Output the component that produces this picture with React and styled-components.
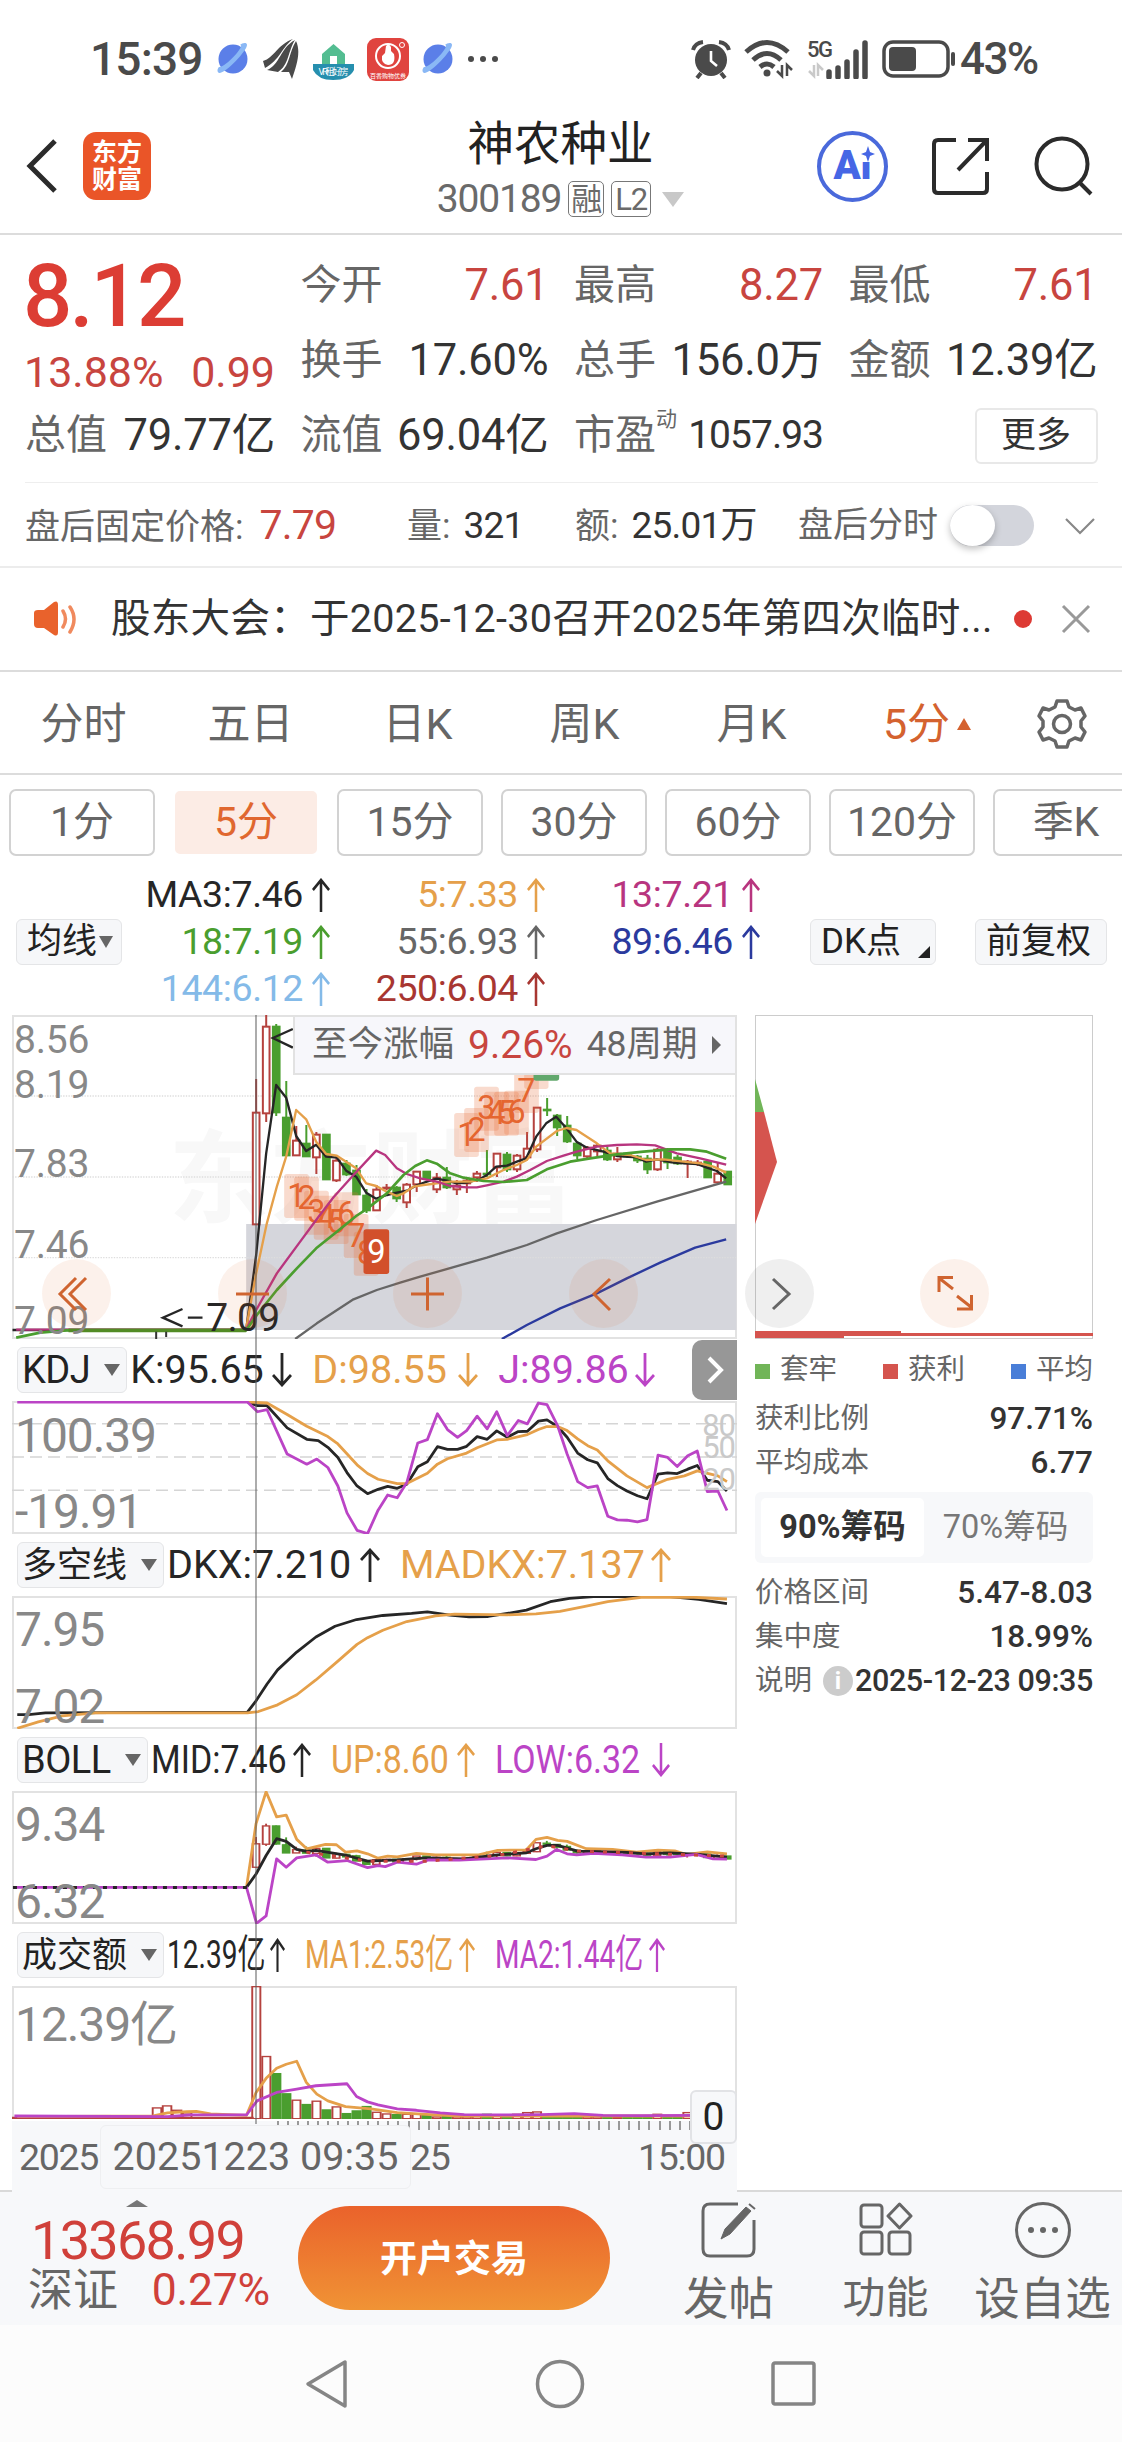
import React from 'react'
import styled, { createGlobalStyle } from 'styled-components'

const RED = '#c8453f'
const GREEN = '#4a9e2f'
const ORANGE = '#e5a04a'
const PURPLE = '#bb44c6'
const BLACK = '#262626'
const GRAY = '#666'

// [color, high, low, bodyTop, bodyBottom]
const candles = [
    ['r', 79, 225, 112, 225], ['r', 15, 122, 26, 114], ['g', 24, 116, 26, 113], ['g', 81, 156, 117, 156],
    ['r', 126, 156, 140, 156], ['g', 125, 157, 143, 157], ['r', 132, 174, 134, 158], ['g', 134, 180, 134, 180],
    ['r', 155, 182, 160, 181], ['g', 160, 176, 163, 175], ['g', 165, 195, 170, 195], ['g', 189, 213, 195, 211],
    ['r', 185, 211, 189, 211], ['r', 184, 190, 187, 189], ['g', 186, 202, 187, 199], ['r', 183, 208, 184, 203],
    ['r', 171, 192, 171, 185], ['g', 171, 179, 171, 179], ['r', 173, 193, 177, 190], ['g', 167, 189, 177, 188],
    ['r', 180, 195, 185, 190], ['r', 177, 193, 180, 184], ['r', 171, 182, 173, 178], ['g', 150, 177, 173, 175],
    ['r', 153, 177, 153, 168], ['g', 152, 172, 154, 170], ['r', 154, 172, 155, 170], ['r', 132, 160, 148, 158],
    ['r', 107, 152, 107, 150], ['g', 98, 116, 109, 111], ['g', 114, 136, 115, 128], ['g', 116, 143, 125, 142],
    ['g', 143, 159, 143, 156], ['r', 146, 158, 147, 157], ['r', 144, 156, 145, 152], ['g', 147, 161, 150, 160],
    ['r', 147, 162, 153, 160], ['g', 152, 158, 153, 157], ['g', 155, 163, 156, 161], ['g', 155, 174, 158, 170],
    ['r', 148, 171, 149, 170], ['g', 148, 169, 149, 163], ['g', 155, 165, 157, 164], ['r', 160, 178, 161, 164],
    ['r', 160, 166, 162, 164], ['g', 160, 178, 161, 178], ['r', 163, 183, 173, 183], ['g', 171, 185, 171, 185],
]

const maLines = [
    [BLACK, '37,990 738,990 768,765 798,460 828,255 858,293 888,408 918,453 948,434 978,470 1010,473 1038,512 1068,530 1098,578 1128,596 1160,585 1190,578 1220,572 1250,556 1280,545 1310,536 1340,542 1370,550 1400,548 1440,537 1460,525 1488,500 1520,497 1550,485 1578,475 1608,410 1638,370 1668,350 1699,385 1729,425 1760,443 1810,455 1850,468 1910,472 1938,485 1970,478 2020,488 2090,492 2120,503 2150,513 2178,535'],
    [ORANGE, '738,985 768,820 800,670 830,560 858,470 888,330 918,358 948,425 978,462 1010,467 1068,505 1098,550 1128,558 1160,575 1190,588 1210,580 1240,560 1270,555 1310,550 1350,545 1410,545 1460,535 1510,510 1550,495 1580,480 1608,440 1670,393 1699,384 1729,390 1790,430 1830,460 1890,465 1938,480 1990,478 2050,485 2100,490 2140,500 2178,518'],
    ['#b8357f', '48,989 738,988 768,930 830,820 900,725 948,660 1000,592 1060,525 1128,452 1155,465 1190,505 1220,522 1260,535 1310,545 1350,558 1400,562 1430,562 1460,556 1510,545 1550,530 1590,510 1640,483 1690,467 1730,455 1790,440 1850,435 1910,433 1965,436 2030,460 2100,475 2178,494'],
    [GREEN, '48,1013 120,998 200,991 738,991 770,945 830,870 890,805 948,745 1010,695 1068,648 1098,628 1160,580 1210,525 1245,498 1280,481 1310,491 1350,520 1390,533 1450,543 1510,546 1580,540 1640,508 1710,485 1770,475 1850,463 1930,455 2010,448 2070,448 2120,455 2178,476'],
    [GRAY, '885,1017 950,970 1060,898 1130,870 1200,848 1260,830 1460,773 1580,735 1670,700 1790,660 1970,605 2178,545'],
    ['#2b3a9e', '1505,1017 1580,975 1680,925 1790,880 1880,835 1980,788 2085,743 2178,718'],
]

// countdown markers: [digit, left, text baseline]
const markers = [
    [1, 852, 620], [2, 882, 628], [3, 912, 670], [4, 941, 685], [5, 971, 698], [6, 1001, 675], [7, 1031, 740], [8, 1061, 793],
    [1, 1362, 437], [2, 1392, 422], [3, 1422, 358], [4, 1452, 373], [5, 1482, 373], [6, 1512, 370], [7, 1542, 305],
]

const kdj = [
    [BLACK, '517,185 538,196 558,196 600,262 641,296 665,300 685,320 706,350 725,395 746,435 768,458 790,445 810,436 830,442 850,430 873,378 893,363 914,318 935,326 956,326 975,317 997,288 1018,296 1038,271 1060,290 1083,273 1102,272 1125,242 1143,238 1165,258 1185,290 1207,337 1228,357 1248,366 1270,413 1290,434 1310,450 1332,464 1352,473 1375,400 1395,396 1415,398 1437,385 1457,374 1478,418 1500,422 1519,450'],
    [ORANGE, '517,185 558,188 600,222 641,257 685,288 706,310 746,372 768,398 790,415 830,428 850,428 893,397 914,370 935,354 975,337 997,321 1038,298 1060,296 1102,282 1125,267 1143,258 1165,258 1185,270 1207,295 1228,315 1248,328 1270,360 1310,405 1352,440 1395,415 1430,405 1457,390 1500,405 1519,422'],
    [PURPLE, '36,185 517,185 538,214 558,208 600,340 641,370 662,355 685,380 706,435 725,515 746,567 768,577 790,507 810,462 830,470 850,425 873,307 893,297 914,220 935,267 956,290 975,270 997,227 1018,265 1038,214 1060,285 1083,240 1102,250 1125,188 1143,193 1165,255 1185,340 1207,422 1228,440 1248,435 1270,525 1290,536 1310,537 1332,542 1352,535 1375,343 1395,350 1415,377 1437,345 1457,331 1478,452 1500,450 1519,508'],
]

const dkx = [
    [BLACK, '36,521 60,521 95,516 517,514 535,480 558,430 580,388 620,335 660,290 700,258 745,238 800,226 860,220 893,215 940,225 980,230 1020,229 1060,220 1100,210 1150,185 1190,175 1240,170 1400,170 1460,178 1519,191'],
    [ORANGE, '36,562 80,543 130,525 200,516 517,516 540,512 580,492 620,462 660,418 706,362 746,312 768,292 800,270 850,244 910,227 950,222 1060,224 1120,221 1170,214 1220,200 1270,185 1340,172 1440,171 1519,177'],
]

const boll = [
    [ORANGE, '515,455 535,265 556,170 578,245 598,240 620,312 641,340 680,327 703,328 722,350 746,346 768,355 790,368 810,362 830,364 870,354 910,358 1000,358 1040,345 1100,343 1120,312 1143,306 1165,315 1185,318 1225,340 1280,342 1330,350 1375,344 1410,346 1435,357 1478,349 1519,355'],
    [BLACK, '515,455 535,415 556,360 578,310 598,318 620,342 641,348 660,345 725,360 768,377 830,373 890,367 970,370 1040,358 1100,352 1120,340 1143,330 1165,330 1207,347 1310,351 1350,355 1400,352 1460,357 1519,365'],
    [PURPLE, '27,455 515,455 536,562 556,540 578,370 598,395 620,367 660,358 685,380 725,375 768,396 790,390 805,393 830,380 870,386 895,373 960,374 1060,367 1120,372 1143,362 1163,342 1185,355 1205,358 1240,354 1300,358 1350,365 1400,365 1455,357 1490,370 1519,371'],
]

const volumeLines = [
    [ORANGE, '36,557 320,555 350,546 390,542 410,541 440,549 515,553 535,485 556,443 578,413 598,401 620,392 640,455 662,490 685,510 722,527 775,534 830,545 890,550 960,555 1450,555'],
    [PURPLE, '30,555 350,557 400,552 515,552 537,510 578,485 620,475 660,465 725,459 745,497 768,513 790,522 830,534 870,538 920,546 970,551 1050,552 1130,551 1200,548 1260,553 1340,554 1450,553'],
]

const volumeTops = [
    168, 376, 427, 487, 506, 519, 509, 535, 526, 546, 538, 525, 542, 547, 549, 548, 548, 552, 556, 554, 556, 556, 555, 548,
    552, 554, 548, 543, 541, 552, 550, 552, 552, 556, 556, 556, 557, 556, 557, 556, 548, 552, 556, 543,
]

const ArrowIcon = ({ down, w = 20 }) => (
    <svg width={w} height="34" viewBox="0 0 20 34" preserveAspectRatio="none" fill="none" stroke="currentColor" strokeWidth="2.8">
        <path d={down ? 'M10 0V32M1 22L10 32L19 22' : 'M10 34V2M1 12L10 2L19 12'} />
    </svg>
)

const Planet = () => (
    <svg width="32" height="34" viewBox="0 0 32 34">
        <circle cx="16" cy="17" r="14.5" fill="#5b7fe8" />
        <path d="M2 31C8 32 30 9 30 3C30 0 25 1 23 3C29 3 8 26 2 25C0 27 0 30 2 31Z" fill="#8ab8f5" />
    </svg>
)

const Lines = ({ data }) => data.map(([color, points]) => (
    <polyline key={color} points={points} fill="none" stroke={color} strokeWidth="2.8" strokeLinejoin="round" vectorEffect="non-scaling-stroke" />
))

const Indicator = ({ name, readings, labels, condense, tall, children }) => (
    <>
        <IndicatorHead>
            <NameButton $head $tight={name === 'BOLL' || name === 'KDJ'}>{name}<Caret /></NameButton>
            {readings.map(([text, color, width, down, arrow]) => (
                <Reading key={text} $color={color}>
                    <ReadingText $w={width} $sx={condense}>{text}</ReadingText>
                    <ArrowIcon down={down} w={arrow} />
                </Reading>
            ))}
        </IndicatorHead>
        <Panel>
            <PanelSvg viewBox={tall ? '25 182 1515 396' : '25 168 1515 396'} preserveAspectRatio="none">{children}</PanelSvg>
            {labels.map(([text, top]) => <PanelLabel key={text} $top={top}>{text}</PanelLabel>)}
        </Panel>
    </>
)

const StatusBar = () => (
    <Status>
        <Clock>15:39</Clock>
        <StatusIcons>
            <Planet />
            <svg width="38" height="42" viewBox="0 0 38 42" fill="#4a4a4a">
                <path d="M1 23C12 20 16 6 31 1C20 9 18 22 3 30ZM5 32C18 27 18 10 33 2C26 13 27 27 16 34ZM19 34C28 27 27 14 34 3C39 13 35 27 30 41L27 34Z" />
            </svg>
            <svg width="41" height="42" viewBox="0 0 41 42">
                <path d="M0 26H41V32Q36 42 20 42Q5 42 0 32Z" fill="#268fae" />
                <path d="M9 16L20.500 6L32 16V26H9Z" fill="#53bd91" />
                <path d="M17 26V18H24V26" fill="#fff" />
                <text x="20.500" y="37" textAnchor="middle" fontSize="9" fill="#fff" textLength="30">VR租好房</text>
            </svg>
            <svg width="42" height="43" viewBox="0 0 42 43">
                <rect width="42" height="43" rx="9" fill="#e0443f" />
                <circle cx="21" cy="18" r="12" fill="none" stroke="#fff" strokeWidth="2" />
                <path d="M15 18L18 15L19 8Q22 5 24 9V13L27 16Q29 27 21 27Q14 26 15 18Z" fill="#fff" />
                <circle cx="35" cy="7" r="2.500" fill="none" stroke="#fff" />
                <text x="21" y="40" textAnchor="middle" fontSize="6" fill="#fff">百香购物优券</text>
            </svg>
            <Planet />
            <svg width="32" height="8" fill="#4a4a4a"><circle cx="4" cy="4" r="3" /><circle cx="16" cy="4" r="3" /><circle cx="28" cy="4" r="3" /></svg>
        </StatusIcons>
        <StatusRight>
            <svg width="40" height="40" viewBox="0 0 40 40">
                <circle cx="20" cy="21" r="16" fill="#4a4a4a" />
                <path d="M20 12V22L26 27" fill="none" stroke="#fff" strokeWidth="2.600" />
                <path d="M2 11Q4 4 12 3M38 11Q36 4 28 3M10 34L6 39M30 34L34 39" fill="none" stroke="#4a4a4a" strokeWidth="4" />
            </svg>
            <svg width="50" height="40" viewBox="0 0 50 40" fill="none" stroke="#4a4a4a" strokeWidth="5">
                <path d="M2 13Q23 -6 44 13M9 21Q23 8 37 21M16 28Q23 22 30 28" />
                <circle cx="23" cy="34" r="3.500" fill="#4a4a4a" stroke="none" />
                <path d="M38 26V37L33 32M43 37V26L48 31" strokeWidth="2.500" />
            </svg>
            <svg width="62" height="40" viewBox="0 0 62 40">
                <text x="0" y="18" fontSize="22" fontWeight="500" fill="#4a4a4a" textLength="26">5G</text>
                <path d="M7 26V37L2 32M11 37V26L16 31" stroke="#c9c9c9" strokeWidth="2.500" fill="none" />
                <path d="M22 38V33M31 38V29M40 38V23M49 38V13M58 38V4" stroke="#4a4a4a" strokeWidth="5.500" strokeLinecap="round" />
            </svg>
            <svg width="76" height="38" viewBox="0 0 76 38">
                <rect x="2" y="2" width="64" height="34" rx="9" fill="none" stroke="#4a4a4a" strokeWidth="3.500" />
                <rect x="7" y="7" width="27" height="24" rx="4" fill="#4a4a4a" />
                <path d="M71 14V24" stroke="#4a4a4a" strokeWidth="4" strokeLinecap="round" />
            </svg>
            <Battery>43%</Battery>
        </StatusRight>
    </Status>
)

const Header = () => (
    <HeaderBar>
        <HeaderSide>
            <svg width="32" height="56" viewBox="0 0 32 56"><path d="M29 3L4 28L29 53" fill="none" stroke="#2b2b2b" strokeWidth="5" /></svg>
            <Logo><span>东方</span><span>财富</span></Logo>
        </HeaderSide>
        <TitleBlock>
            <Title>神农种业</Title>
            <Code>300189<Badge>融</Badge><Badge $w="40px">L2</Badge><TitleCaret /></Code>
        </TitleBlock>
        <HeaderTools>
            <AiBadge>
                Ai
                <svg width="14" height="16" viewBox="0 0 14 16">
                    <rect width="14" height="16" fill="#fff" />
                    <path d="M7 0L9 6L14 8L9 10L7 16L5 10L0 8L5 6Z" fill="#4666e5" />
                </svg>
            </AiBadge>
            <svg width="60" height="60" viewBox="0 0 60 60" fill="none" stroke="#2b2b2b" strokeWidth="4">
                <path d="M25 4H7Q3 4 3 8V53Q3 57 7 57H52Q56 57 56 53V36M37 4H56V25M56 4L27 34" />
            </svg>
            <svg width="60" height="60" viewBox="0 0 60 60" fill="none" stroke="#2b2b2b" strokeWidth="4">
                <circle cx="28" cy="28" r="25.500" /><path d="M46 47L57 58" />
            </svg>
        </HeaderTools>
    </HeaderBar>
)

const Quote = () => (
    <QuoteGrid>
        <PriceCell>
            <Price>8.12</Price>
            <Change><span>13.88%</span><span>0.99</span></Change>
        </PriceCell>
        <Stat>今开<StatValue $red>7.61</StatValue></Stat>
        <Stat>最高<StatValue $red>8.27</StatValue></Stat>
        <Stat>最低<StatValue $red>7.61</StatValue></Stat>
        <Stat>换手<StatValue>17.60%</StatValue></Stat>
        <Stat>总手<StatValue>156.0万</StatValue></Stat>
        <Stat>金额<StatValue>12.39亿</StatValue></Stat>
        <Stat>总值<StatValue>79.77亿</StatValue></Stat>
        <Stat>流值<StatValue>69.04亿</StatValue></Stat>
        <Stat><span>市盈<Sup>动</Sup></span><StatValue $small>1057.93</StatValue></Stat>
        <MoreButton>更多</MoreButton>
    </QuoteGrid>
)

const MainChart = () => (
    <MainPanel>
        <PanelSvg viewBox="37 45 2172 972">
            <text x="505" y="645" fontSize="302" fontWeight="700" fill="#f8f8f8" textLength="1218">东方财富</text>
            <rect x="738" y="672" width="1471" height="318" fill="#d5d6dc" />
            {[288, 531, 773].map(y => <path key={y} d={`M37 ${y}H2209`} stroke="#ddd" strokeWidth="4" strokeDasharray="4 4" />)}
            {candles.map(([c, high, low, top, bottom], i) => {
                const x = 768 + i * 30.1
                const color = c === 'r' ? '#b5423e' : GREEN
                return (
                    <g key={i} stroke={color} strokeWidth="6">
                        <path d={`M${x} ${high * 3}V${top * 3}M${x} ${bottom * 3}V${low * 3}`} />
                        <rect x={x - 10} y={top * 3 + 2} width="20" height={Math.max(2, (bottom - top) * 3 - 4)} fill={c === 'r' ? '#fff' : color} />
                    </g>
                )
            })}
            {markers.map(([n, x, y]) => (
                <g key={x}>
                    <rect x={x} y={y - 98} width="74" height="132" rx="8" fill="#e8703a" opacity=".25" />
                    <text x={x + 37} y={y} textAnchor="middle" fontSize="98" fill="#e5652f">{n}</text>
                </g>
            ))}
            <rect x="1572" y="180" width="73" height="87" rx="8" fill="#e8703a" opacity=".25" />
            <rect x="1600" y="180" width="77" height="62" rx="8" fill="#62a86c" />
            {maLines.map(([color, points]) => (
                <polyline key={color} points={points} fill="none" stroke={color} strokeWidth={color === GREEN ? 8 : 7} strokeLinejoin="round" />
            ))}
            <path d="M205 991H738" stroke="#528b25" strokeWidth="11" />
            <path d="M468 995V1017M498 995V1011" stroke="#333" strokeWidth="6" />
            <rect x="1090" y="688" width="77" height="134" rx="8" fill="#d2502b" />
            <text x="1129" y="788" textAnchor="middle" fontSize="98" fill="#fff">9</text>
            <path d="M878 87L818 114L878 143M547 927L488 953L547 979M563 953H607" fill="none" stroke={BLACK} strokeWidth="7" />
            <text x="618" y="992" fontSize="117" fill={BLACK} textLength="222">7.09</text>
        </PanelSvg>
        <AxisLabel $top={16}>8.56</AxisLabel>
        <AxisLabel $top={61}>8.19</AxisLabel>
        <AxisLabel $top={140}>7.83</AxisLabel>
        <AxisLabel $top={221}>7.46</AxisLabel>
        <AxisLabel $top={297}>7.09</AxisLabel>
        <RangeBar>至今涨幅<em>9.26%</em>48周期<RangeCaret /></RangeBar>
    </MainPanel>
)

const toolIcons = [
    'M34 19L18 35L34 51M44 19L28 35L44 51',
    'M18 35H51',
    'M18 35H51M34.500 18.500V51.500',
    'M41 20L25 35L41 51',
    'M28 20L44 35L28 50',
    'M33 30L19 19M19 33V18.500H33M37 37L51 48M37 50H51.500V36',
]

export default function App() {
    return (
        <Page>
            <GlobalStyle />
            <StatusBar />
            <Header />
            <Quote />
            <AfterHours>
                <AfterItem $w="382px">盘后固定价格:<b className="up">7.79</b></AfterItem>
                <AfterItem $w="168px">量:<b>321</b></AfterItem>
                <AfterItem $w="223px">额:<b>25.01万</b></AfterItem>
                <AfterItem $w="152px">盘后分时</AfterItem>
                <Toggle />
                <svg width="32" height="18" viewBox="0 0 32 18"><path d="M2 2L16 16L30 2" fill="none" stroke="#888" strokeWidth="2.200" /></svg>
            </AfterHours>
            <Notice>
                <svg width="44" height="36" viewBox="0 0 44 36">
                    <path d="M0 12Q0 9 4 9H10L20 1Q24 -1 24 4V31Q24 36 20 34L10 27H4Q0 27 0 23Z" fill="#e9622c" />
                    <path d="M29 10Q34 18 29 26M36 6Q44 18 36 31" fill="none" stroke="#f08a5e" strokeWidth="3.500" strokeLinecap="round" />
                </svg>
                <NoticeText>股东大会：于2025-12-30召开2025年第四次临时...</NoticeText>
                <Dot />
                <svg width="30" height="30" viewBox="0 0 30 30"><path d="M2 2L28 28M28 2L2 28" stroke="#999" strokeWidth="3" /></svg>
            </Notice>
            <Tabs>
                <Tab>分时</Tab><Tab>五日</Tab><Tab>日K</Tab><Tab>周K</Tab><Tab>月K</Tab>
                <Tab $on>5分<UpCaret /></Tab>
                <Tab>
                    <svg width="52" height="52" viewBox="0 0 52 52" fill="none" stroke="#666" strokeWidth="3.500" strokeLinejoin="round">
                        <path d="M21 3H31L33 9L39 12L45 10L49 18L45 23V29L49 34L45 42L39 40L33 43L31 49H21L19 43L13 40L7 42L3 34L7 29V23L3 18L7 10L13 12L19 9Z" />
                        <circle cx="26" cy="26" r="8.500" />
                    </svg>
                </Tab>
            </Tabs>
            <Periods>
                {['1分', '5分', '15分', '30分', '60分', '120分', '季K'].map(p => <Period key={p} $on={p === '5分'}>{p}</Period>)}
            </Periods>
            <Averages>
                <NameButton $ma>均线<Caret $small /></NameButton>
                <AverageGrid>
                    <Average $color={BLACK}>MA3:7.46<ArrowIcon w={18} /></Average>
                    <Average $color={ORANGE}>5:7.33<ArrowIcon w={18} /></Average>
                    <Average $color="#b8357f">13:7.21<ArrowIcon w={18} /></Average>
                    <Average $color={GREEN}>18:7.19<ArrowIcon w={18} /></Average>
                    <Average $color={GRAY}>55:6.93<ArrowIcon w={18} /></Average>
                    <Average $color="#2b3a9e">89:6.46<ArrowIcon w={18} /></Average>
                    <Average $color="#84bae8">144:6.12<ArrowIcon w={18} /></Average>
                    <Average $color="#a83631">250:6.04<ArrowIcon w={18} /></Average>
                </AverageGrid>
                <NameButton $dk>DK点<Corner /></NameButton>
                <NameButton $adj>前复权</NameButton>
            </Averages>
            <Body>
                <Charts>
                    <MainChart />
                    <Indicator
                        tall
                        name="KDJ"
                        readings={[['K:95.65', BLACK, 142, true, 20], ['D:98.55', ORANGE, 146, true, 20], ['J:89.86', PURPLE, 137, true, 20]]}
                        labels={[['100.39', 15], ['-19.91', 91]]}
                    >
                        <path d="M25 250H1540M25 349H1540M25 448H1540" stroke="#d5d5d5" strokeWidth="1.500" strokeDasharray="12 6" vectorEffect="non-scaling-stroke" />
                        <Lines data={kdj} />
                    </Indicator>
                    <Indicator
                        name="多空线"
                        readings={[['DKX:7.210', BLACK, 193, false, 20], ['MADKX:7.137', ORANGE, 251, false, 20]]}
                        labels={[['7.95', 14], ['7.02', 91]]}
                    >
                        <Lines data={dkx} />
                    </Indicator>
                    <Indicator
                        name="BOLL"
                        condense={0.86}
                        readings={[['MID:7.46', BLACK, 142, false, 18], ['UP:8.60', ORANGE, 126, false, 18], ['LOW:6.32', PURPLE, 157, true, 18]]}
                        labels={[['9.34', 14], ['6.32', 91]]}
                    >
                        {candles.map(([c, high, low, top, bottom], i) => {
                            const y = v => 256 + v * 0.618
                            const color = c === 'r' ? '#b5423e' : GREEN
                            return (
                                <g key={i} stroke={color} fill={c === 'r' ? '#fff' : color}>
                                    <path d={`M${535 + i * 20.95} ${y(high)}V${y(low)}`} strokeWidth="4" />
                                    <rect x={528 + i * 20.95} y={y(top)} width="14" height={Math.max(3, (bottom - top) * 0.618)} strokeWidth="4" />
                                </g>
                            )
                        })}
                        <Lines data={boll} />
                        <path d="M27 455H520" stroke={BLACK} strokeWidth="3" strokeDasharray="4 6" vectorEffect="non-scaling-stroke" />
                        <path d="M640 350L768 377H890L1040 360L1143 331L1207 347L1519 362" fill="none" stroke={RED} strokeWidth="3" strokeDasharray="4 9" vectorEffect="non-scaling-stroke" />
                    </Indicator>
                    <Indicator
                        name="成交额"
                        condense={0.71}
                        readings={[['12.39亿', BLACK, 103, false, 15], ['MA1:2.53亿', ORANGE, 154, false, 16], ['MA2:1.44亿', PURPLE, 154, false, 16]]}
                        labels={[['12.39亿', 19]]}
                    >
                        {[531, 525, 538, 546].map((top, i) => (
                            <rect key={top} x={319 + i * 21} y={top} width="18" height={563 - top} fill="#fff" stroke="#b5423e" strokeWidth="4" />
                        ))}
                        {volumeTops.map((top, i) => {
                            const red = candles[i][0] === 'r'
                            return <rect key={i} x={527 + i * 20.95} y={top + 2} width="17" height={561 - top} fill={red ? '#fff' : GREEN} stroke={red ? '#b5423e' : GREEN} strokeWidth="4" />
                        })}
                        <path d="M25 562H530" stroke="#b5423e" strokeWidth="3" vectorEffect="non-scaling-stroke" />
                        <Lines data={volumeLines} />
                    </Indicator>
                    <TimeAxis>
                        <Ticks />
                        <AxisTime $x={7}>2025</AxisTime>
                        <AxisTime $x={398}>25</AxisTime>
                        <AxisTime $x={626}>15:00</AxisTime>
                        <TimeTip>20251223 09:35</TimeTip>
                        <ZeroTip>0</ZeroTip>
                    </TimeAxis>
                    <Cross />
                    <Scale><span>80</span><span>50</span><span>20</span></Scale>
                    <Drawer><svg width="20" height="30" viewBox="0 0 20 30"><path d="M4 3L16 15L4 27" fill="none" stroke="#fff" strokeWidth="4" /></svg></Drawer>
                </Charts>
                <Chips>
                    <ChipBox>
                        <svg width="338" height="323" viewBox="0 0 338 323">
                            <path d="M0 64L9 97H0Z" fill="#71b558" />
                            <path d="M0 97H9L22 147L0 209Z" fill="#d5544e" />
                            <path d="M0 316H146V318H338V321H89V323H0Z" fill="#d5544e" />
                        </svg>
                    </ChipBox>
                    <Legend>
                        <LegendItem $color="#71b558">套牢</LegendItem>
                        <LegendItem $color="#d5544e">获利</LegendItem>
                        <LegendItem $color="#497ed8">平均</LegendItem>
                    </Legend>
                    <ChipRow>获利比例<b>97.71%</b></ChipRow>
                    <ChipRow>平均成本<b>6.77</b></ChipRow>
                    <Segment><Choice $on>90%筹码</Choice><Choice>70%筹码</Choice></Segment>
                    <ChipRow>价格区间<b>5.47-8.03</b></ChipRow>
                    <ChipRow>集中度<b>18.99%</b></ChipRow>
                    <ChipRow $dense>说明<Info>i</Info><b>2025-12-23 09:35</b></ChipRow>
                </Chips>
                <ToolRow>
                    {toolIcons.map((d, i) => (
                        <Tool key={d} $gray={i === 4}>
                            <svg width="69" height="69" viewBox="0 0 69 69"><path d={d} fill="none" stroke="currentColor" strokeWidth="3" /></svg>
                        </Tool>
                    ))}
                </ToolRow>
            </Body>
            <BottomBar>
                <IndexBlock>
                    <IndexCaret />
                    <IndexValue>13368.99</IndexValue>
                    <IndexLine>深证<span>0.27%</span></IndexLine>
                </IndexBlock>
                <TradeButton>开户交易</TradeButton>
                <Actions>
                    <Action>
                        <svg width="56" height="56" viewBox="0 0 56 56" fill="none" stroke="#666" strokeWidth="3">
                            <path d="M37 2H9Q2 2 2 9V47Q2 54 9 54H46Q53 54 53 47V18" />
                            <path d="M20 37L24 27L45 5L50 9L29 32Z" fill="#666" strokeWidth="1" /><path d="M48 2L54 7" strokeWidth="2" />
                        </svg>
                        发帖
                    </Action>
                    <Action $small>
                        <svg width="56" height="56" viewBox="0 0 56 56" fill="none" stroke="#666" strokeWidth="3">
                            <rect x="3" y="3" width="21" height="22" rx="3" /><rect x="3" y="30" width="21" height="22" rx="3" />
                            <rect x="31" y="30" width="21" height="22" rx="3" /><path d="M41.500 2L53 14L41.500 26L30 14Z" strokeLinejoin="round" />
                        </svg>
                        功能
                    </Action>
                    <Action>
                        <svg width="58" height="56" viewBox="0 0 58 56">
                            <circle cx="29" cy="28" r="26.500" fill="none" stroke="#666" strokeWidth="3" />
                            <g fill="#666"><circle cx="17" cy="28" r="3" /><circle cx="29" cy="28" r="3" /><circle cx="41" cy="28" r="3" /></g>
                        </svg>
                        设自选
                    </Action>
                </Actions>
            </BottomBar>
            <SystemNav>
                <svg width="44" height="50" viewBox="0 0 44 50"><path d="M40 3V47L3 25Z" fill="none" stroke="#858585" strokeWidth="3.500" strokeLinejoin="round" /></svg>
                <svg width="50" height="50" viewBox="0 0 50 50"><circle cx="25" cy="25" r="22.500" fill="none" stroke="#858585" strokeWidth="3.500" /></svg>
                <svg width="46" height="46" viewBox="0 0 46 46"><rect x="2" y="2" width="41" height="41" rx="2" fill="none" stroke="#858585" strokeWidth="3.500" /></svg>
            </SystemNav>
        </Page>
    )
}

const GlobalStyle = createGlobalStyle`
    * { box-sizing: border-box; }
    body {
        margin: 0;
        background: #fff;
        font-family: Roboto, "Noto Sans CJK SC", sans-serif;
        line-height: 1;
        white-space: nowrap;
    }
    svg { display: block; flex: none; }
`

const Page = styled.div`
    width: 1122px;
    height: 2442px;
    overflow: hidden;
    background: #fff;
    color: ${GRAY};
`

const Status = styled.div`
    display: flex;
    align-items: center;
    height: 82px;
    padding: 36px 0 0 90px;
`

const Clock = styled.div`
    width: 127px;
    font-size: 46px;
    font-weight: 500;
    letter-spacing: -0.8px;
    color: #4a4a4a;
`

const StatusIcons = styled.div`
    display: flex;
    align-items: center;
    gap: 13px;
    width: 474px;
`

const StatusRight = styled.div`
    display: flex;
    align-items: center;
    gap: 13px;
`

const Battery = styled.div`
    margin-left: -11px;
    font-size: 44px;
    font-weight: 500;
    letter-spacing: -1.6px;
    color: #4a4a4a;
`

const HeaderBar = styled.div`
    display: flex;
    align-items: center;
    justify-content: space-between;
    height: 153px;
    padding: 17px 28px 0 26px;
    border-bottom: 2px solid #dcdcdc;
`

const HeaderSide = styled.div`
    display: flex;
    align-items: center;
    gap: 25px;
    width: 274px;
`

const Logo = styled.div`
    display: flex;
    flex-direction: column;
    align-items: center;
    justify-content: center;
    gap: 2px;
    width: 68px;
    height: 68px;
    border-radius: 13px;
    background: #ea5528;
    color: #fff;
    font-size: 25px;
    font-weight: 700;
`

const TitleBlock = styled.div`
    display: flex;
    flex-direction: column;
    align-items: center;
    gap: 14px;
    padding: 6px 0 0 4px;
`

const Title = styled.div`
    font-size: 46.5px;
    color: #222;
`

const Code = styled.div`
    display: flex;
    align-items: center;
    height: 36px;
    font-size: 39px;
    letter-spacing: -1.2px;
    color: #6a6a6a;
`

const Badge = styled.span`
    display: flex;
    align-items: center;
    justify-content: center;
    width: ${p => p.$w || '36px'};
    height: 36px;
    margin-left: 7px;
    border: 1.5px solid #777;
    border-radius: 5px;
    font-size: 31px;
`

const TitleCaret = styled.i`
    margin-left: 11px;
    border: 11px solid transparent;
    border-top: 15px solid #c8c8c8;
    border-bottom: 0;
`

const HeaderTools = styled.div`
    display: flex;
    align-items: center;
    gap: 43px;
`

const AiBadge = styled.div`
    position: relative;
    display: flex;
    align-items: center;
    justify-content: center;
    width: 71px;
    height: 71px;
    border: 4px solid #4a69db;
    border-radius: 50%;
    color: #4666e5;
    font-size: 40px;
    font-weight: 900;

    svg {
        position: absolute;
        top: 11px;
        right: 9px;
    }
`

const QuoteGrid = styled.div`
    display: grid;
    grid-template-columns: 250px 248px 249px 249px;
    grid-template-rows: 75px 75px 75px;
    column-gap: 25.500px;
    height: 248px;
    margin: 0 24px 0 25px;
    padding-top: 13px;
    border-bottom: 1.5px solid #eee;
`

const PriceCell = styled.div`
    grid-row: span 2;
    padding-top: 5px;
`

const Price = styled.div`
    margin-left: -2px;
    font-size: 87px;
    font-weight: 500;
    letter-spacing: -3px;
    color: #dc3d34;
`

const Change = styled.div`
    display: flex;
    justify-content: space-between;
    margin: 11px 0 0 -1px;
    font-size: 43px;
    color: ${RED};
`

const Stat = styled.div`
    display: flex;
    align-items: center;
    justify-content: space-between;
    font-size: 41px;
`

const StatValue = styled.span`
    font-size: ${p => (p.$small ? '39px' : '43.5px')};
    letter-spacing: ${p => (p.$small ? '-1px' : '-0.2px')};
    color: ${p => (p.$red ? RED : '#333')};
`

const Sup = styled.sup`
    display: inline-block;
    vertical-align: 23px;
    line-height: 0;
    font-size: 21px;
`

const MoreButton = styled.div`
    display: flex;
    align-items: center;
    justify-content: center;
    justify-self: end;
    align-self: center;
    width: 123px;
    height: 56px;
    border: 2px solid #e8e8e8;
    border-radius: 6px;
    font-size: 35px;
    color: #333;
`

const AfterHours = styled.div`
    display: flex;
    align-items: center;
    height: 85px;
    padding: 2px 0 0 25px;
    border-bottom: 2px solid #ececec;
    font-size: 35px;
`

const AfterItem = styled.div`
    width: ${p => p.$w};
    flex: none;

    b {
        margin-left: 13px;
        font-size: 37px;
        font-weight: 400;
        letter-spacing: -0.8px;
        color: #333;
    }
    .up {
        margin-left: 16px;
        font-size: 41px;
        color: ${RED};
    }
`

const Toggle = styled.div`
    width: 84px;
    height: 41px;
    margin-right: 30px;
    border-radius: 21px;
    background: #d3d5dc;
    flex: none;

    &::before {
        content: '';
        display: block;
        width: 45px;
        height: 41px;
        border-radius: 50%;
        background: #fff;
        box-shadow: 0 3px 7px rgba(0, 0, 0, 0.25);
    }
`

const Notice = styled.div`
    display: flex;
    align-items: center;
    height: 104px;
    padding-left: 34px;
    border-bottom: 2px solid #dcdcdc;
`

const NoticeText = styled.div`
    width: 903px;
    margin-left: 33px;
    font-size: 39.5px;
    letter-spacing: 0.3px;
    color: #333;
`

const Dot = styled.i`
    width: 18px;
    height: 18px;
    margin-right: 29px;
    border-radius: 50%;
    background: #dd3a34;
`

const Tabs = styled.div`
    display: grid;
    grid-template-columns: repeat(6, 167px) 120px;
    height: 103px;
    border-bottom: 2px solid #dcdcdc;
`

const Tab = styled.div`
    display: flex;
    align-items: center;
    justify-content: center;
    gap: 7px;
    padding-top: 3px;
    padding-left: ${p => (p.$on ? '17px' : 0)};
    font-size: 43px;
    color: ${p => (p.$on ? '#d4622f' : GRAY)};
`

const UpCaret = styled.i`
    border: 7.5px solid transparent;
    border-bottom: 12px solid #d4622f;
    border-top: 0;
`

const Periods = styled.div`
    display: flex;
    gap: 18px;
    padding: 14px 0 0 9px;
`

const Period = styled.div`
    display: flex;
    align-items: center;
    justify-content: center;
    flex: none;
    width: 146px;
    height: 67px;
    border: 2px solid ${p => (p.$on ? '#fff' : '#d2d2d2')};
    border-radius: 7px;
    background: ${p => (p.$on ? '#fcece5' : '#fff')};
    font-size: 41px;
    color: ${p => (p.$on ? '#e0672f' : GRAY)};
`

const Averages = styled.div`
    display: flex;
    align-items: center;
    height: 159px;
    padding: 18px 0 6px 16px;
`

const AverageGrid = styled.div`
    display: grid;
    grid-template-columns: 208px 215px 215px;
    grid-auto-rows: 47px;
    width: 688px;
    flex: none;
`

const Average = styled.div`
    display: flex;
    align-items: center;
    justify-content: flex-end;
    gap: 9px;
    font-size: 37.5px;
    letter-spacing: -0.4px;
    color: ${p => p.$color};
`

const NameButton = styled.div`
    display: flex;
    align-items: center;
    justify-content: space-between;
    flex: none;
    width: ${p => (p.$ma ? '106px' : p.$adj ? '132px' : p.$dk ? '126px' : 'auto')};
    height: 46px;
    margin-right: ${p => (p.$dk ? '39px' : 0)};
    padding: ${p => (p.$head ? '0 6px 0 4px' : '0 8px 0 10px')};
    border: 1.5px solid #e4e5e7;
    border-radius: 6px;
    background: #f6f7f9;
    font-size: ${p => (p.$tight ? '38px' : '35px')};
    letter-spacing: ${p => (p.$tight ? '-0.5px' : 0)};
    color: #222;
`

const Caret = styled.i`
    margin-left: ${p => (p.$small ? '-2px' : '14px')};
    border: ${p => (p.$small ? '7px' : '8px')} solid transparent;
    border-top: 12px solid #666;
    border-bottom: 0;
`

const Corner = styled.i`
    align-self: flex-end;
    margin: 0 -3px 6px 0;
    border-left: 12px solid transparent;
    border-bottom: 12px solid #222;
`

const Body = styled.div`
    position: relative;
    display: flex;
    align-items: flex-start;
    height: 1175px;
    padding-left: 12px;
`

const Charts = styled.div`
    position: relative;
    width: 725px;
`

const MainPanel = styled.div`
    position: relative;
    width: 725px;
    height: 324px;
    box-shadow: inset 0 0 0 2px #e2e2e2;
`

const PanelSvg = styled.svg`
    width: 725px;
    height: 100%;
`

const AxisLabel = styled.div`
    position: absolute;
    left: 2px;
    top: ${p => p.$top - 10}px;
    font-size: 39px;
    letter-spacing: -0.2px;
    color: #888;
`

const RangeBar = styled.div`
    position: absolute;
    top: 0;
    right: 0;
    display: flex;
    align-items: center;
    width: 444px;
    height: 60px;
    padding-left: 17px;
    border: 2px solid #e2e2e2;
    background: #f7f7fb;
    font-size: 35.5px;

    em {
        margin: 0 14px;
        font-size: 39px;
        font-style: normal;
        color: ${RED};
    }
`

const RangeCaret = styled.i`
    margin-left: 14px;
    border: 9px solid transparent;
    border-left: 9px solid #666;
    border-right: 0;
`

const IndicatorHead = styled.div`
    display: flex;
    align-items: center;
    height: 62px;
    padding-left: 5px;
`

const Reading = styled.div`
    display: flex;
    align-items: center;
    margin: 0 17px 0 3px;
    color: ${p => p.$color};
`

const ReadingText = styled.span`
    width: ${p => p.$w}px;
    font-size: 39.5px;
    transform: scaleX(${p => p.$sx || 1});
    transform-origin: left;
`

const Panel = styled.div`
    position: relative;
    width: 725px;
    height: 133px;
    box-shadow: inset 0 0 0 2px #e2e2e2;
`

const PanelLabel = styled.div`
    position: absolute;
    left: 3px;
    top: ${p => p.$top - 4}px;
    font-size: 48px;
    letter-spacing: -1.1px;
    color: #888;
`

const TimeAxis = styled.div`
    position: relative;
    height: 72px;
    margin-top: 2px;
    background: #f7f8fa;
`

const Ticks = styled.div`
    height: 9px;
    margin: 0 46px 0 265px;
    background: repeating-linear-gradient(90deg, #999 0 2px, transparent 2px 10.04px);
`

const AxisTime = styled.div`
    position: absolute;
    top: 18px;
    left: ${p => p.$x}px;
    font-size: 37.5px;
    letter-spacing: -1.3px;
`

const TimeTip = styled.div`
    position: absolute;
    top: 4px;
    left: 88px;
    display: flex;
    align-items: center;
    justify-content: center;
    width: 311px;
    height: 64px;
    border: 1.5px solid #eeeff1;
    border-radius: 6px;
    background: #f7f8fa;
    font-size: 39.5px;
`

const ZeroTip = styled.div`
    position: absolute;
    top: -31px;
    right: 0;
    display: flex;
    align-items: center;
    justify-content: center;
    width: 47px;
    height: 54px;
    border: 2px solid #e2e3e6;
    border-radius: 6px;
    background: #f7f8fa;
    font-size: 39px;
    color: #222;
`

const Cross = styled.div`
    position: absolute;
    top: 0;
    left: 243px;
    width: 2px;
    height: 1109px;
    background: rgba(90, 90, 90, 0.5);
`

const Scale = styled.div`
    position: absolute;
    top: 395px;
    right: 2px;
    font-size: 31px;
    letter-spacing: -1px;
    color: #c9c9c9;

    span {
        display: block;
        height: 22px;
    }
    span:last-child {
        margin-top: 10px;
    }
`

const Drawer = styled.div`
    position: absolute;
    top: 325px;
    right: 0;
    display: flex;
    align-items: center;
    justify-content: center;
    width: 45px;
    height: 60px;
    border-radius: 10px 0 0 10px;
    background: #979797;
`

const Chips = styled.div`
    width: 338px;
    margin-left: 18px;
`

const ChipBox = styled.div`
    height: 324px;
    margin-bottom: 11px;
    border: 1.5px solid #ccc;

    svg { margin: -1px; }
`

const Legend = styled.div`
    display: flex;
    justify-content: space-between;
    height: 47px;
    padding-top: 6px;
`

const LegendItem = styled.div`
    font-size: 28.5px;

    &::before {
        content: '';
        display: inline-block;
        width: 15px;
        height: 15px;
        margin-right: 10px;
        background: ${p => p.$color};
    }
`

const ChipRow = styled.div`
    display: flex;
    align-items: center;
    height: 44px;
    font-size: 28.5px;

    b {
        margin-left: auto;
        font-size: ${p => (p.$dense ? '30.5px' : '31.5px')};
        font-weight: 500;
        letter-spacing: ${p => (p.$dense ? '-0.4px' : 0)};
        color: #333;
    }
`

const Segment = styled.div`
    display: flex;
    height: 71px;
    margin: 7px 0 8px;
    padding: 6px;
    border-radius: 6px;
    background: #f7f8fa;
`

const Choice = styled.div`
    display: flex;
    align-items: center;
    justify-content: center;
    flex: 1;
    border-radius: 5px;
    background: ${p => (p.$on ? '#fff' : 'none')};
    font-size: 32.5px;
    font-weight: ${p => (p.$on ? 700 : 400)};
    color: ${p => (p.$on ? '#333' : '#777')};
`

const Info = styled.i`
    width: 30px;
    height: 30px;
    margin-left: 11px;
    border-radius: 50%;
    background: #ccc;
    color: #fff;
    font-size: 24px;
    font-style: normal;
    font-weight: 700;
    line-height: 30px;
    text-align: center;
`

const ToolRow = styled.div`
    position: absolute;
    top: 244px;
    left: 42px;
    display: flex;
    gap: 106.7px;
`

const Tool = styled.div`
    flex: none;
    border-radius: 50%;
    background: ${p => (p.$gray ? 'rgba(100, 100, 100, 0.1)' : 'rgba(217, 95, 38, 0.09)')};
    color: ${p => (p.$gray ? '#666' : '#cf6430')};
`

const BottomBar = styled.div`
    display: flex;
    height: 135px;
    border-top: 2px solid #d9d9d9;
    background: #f7f8fa;
`

const IndexBlock = styled.div`
    width: 298px;
    padding: 8px 0 0 28px;
    flex: none;
`

const IndexCaret = styled.i`
    display: block;
    width: 0;
    margin-left: 98px;
    border: 11px solid transparent;
    border-bottom: 7px solid #777;
    border-top: 0;
`

const IndexValue = styled.div`
    margin: 7px 0 0 3px;
    font-size: 54px;
    letter-spacing: -1.7px;
    color: #d0403a;
`

const IndexLine = styled.div`
    display: flex;
    justify-content: space-between;
    padding-right: 28px;
    font-size: 45px;

    span {
        font-size: 44.5px;
        letter-spacing: -0.2px;
        color: #d0403a;
    }
`

const TradeButton = styled.div`
    display: flex;
    align-items: center;
    justify-content: center;
    flex: none;
    width: 312px;
    height: 104px;
    margin-top: 14px;
    padding-top: 2px;
    border-radius: 52px;
    background: linear-gradient(#ea622b, #f09335);
    color: #fff;
    font-size: 37px;
    font-weight: 700;
`

const Actions = styled.div`
    display: grid;
    grid-template-columns: repeat(3, 157px);
    padding: 10px 0 0 40px;
`

const Action = styled.div`
    display: flex;
    flex-direction: column;
    align-items: center;
    gap: 19px;
    font-size: ${p => (p.$small ? '43px' : '45.5px')};
`

const SystemNav = styled.div`
    display: flex;
    align-items: center;
    justify-content: space-between;
    height: 117px;
    padding: 0 305px;
    background: #fcfcfc;
`
